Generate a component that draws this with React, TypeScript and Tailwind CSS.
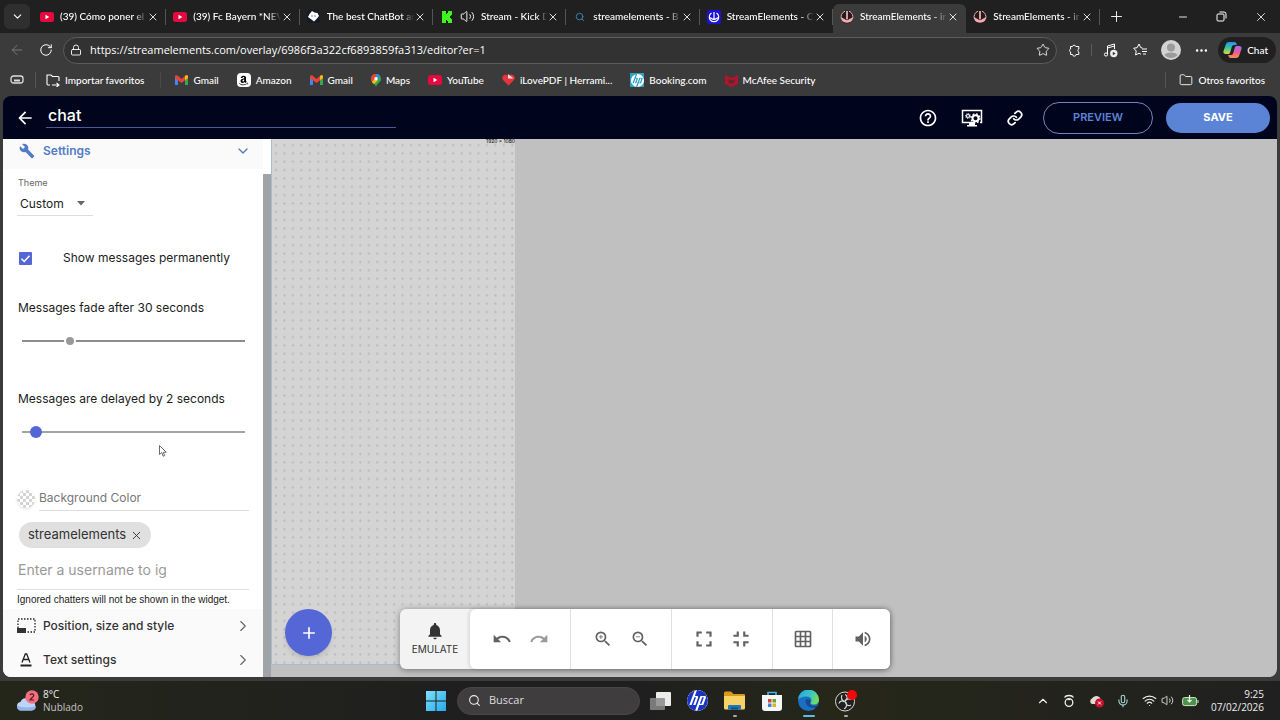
import type { ReactNode } from "react";
import {
    MdArrowBack,
    MdBuild,
    MdFullscreen,
    MdFullscreenExit,
    MdGridOn,
    MdHelpOutline,
    MdNotifications,
    MdRedo,
    MdUndo,
    MdVolumeUp,
    MdZoomIn,
    MdZoomOut,
} from "react-icons/md";
import { FaAmazon } from "react-icons/fa";
import { SiHp } from "react-icons/si";
import {
    ArrowLeft,
    ChevronDown,
    ChevronRight,
    ChevronUp,
    Ellipsis,
    Folder,
    Link,
    Lock,
    Mic,
    Minus,
    Plus,
    RotateCw,
    Search,
    Star,
    Volume2,
    Wifi,
    X,
} from "lucide-react";

const YoutubeIcon = () => (
    <svg width="14" height="14" viewBox="0 0 14 14">
        <rect y="2" width="14" height="10" rx="2.5" fill="#e5093f" />
        <path d="M5.5 4.8v4.4L9.3 7z" fill="#fff" />
    </svg>
);

const BotIcon = () => (
    <svg width="13" height="13" viewBox="0 0 13 13">
        <rect width="13" height="13" rx="3" fill="#161a26" />
        <path d="M5 1l2.500 1.500L10.500 3 12 6l-2.500 3L7 11.500 4.500 9.500 1 7l1.500-3z" fill="#fff" />
        <circle cx="5" cy="6" r=".7" fill="#555" />
        <circle cx="8" cy="6" r=".7" fill="#555" />
    </svg>
);

const KickIcon = () => (
    <svg width="12" height="12" viewBox="0 0 12 12">
        <path d="M1 0h4v3h1V2h1V0h4v4h-1v1H9v2h1v1h1v4H7v-2H6V9H5v3H1z" fill="#3df51a" />
    </svg>
);

const AnchorTileIcon = () => (
    <svg width="14" height="14" viewBox="0 0 14 14">
        <rect width="14" height="14" rx="2" fill="#1b12d6" />
        <path
            d="M4.500 3A4.700 4.700 0 1 0 9.500 3M7 2v7.500M2.500 7.500c1.500 0 2 2 4.500 2s3-2 4.500-2"
            stroke="#fff"
            strokeWidth="1.200"
            fill="none"
        />
    </svg>
);

const AnchorRoundIcon = () => (
    <svg width="14" height="14" viewBox="0 0 14 14">
        <circle cx="7" cy="7" r="6.500" fill="#2e1518" />
        <path d="M.8 7.500c2 0 3 2 6.200 2s4.200-2 6.200-2a6.300 6.300 0 0 1-12.400 0z" fill="#f0b0b3" />
        <path d="M5 1.200A6 6 0 0 0 1.500 9M9 1.200A6 6 0 0 1 12.500 9" stroke="#d9b5b7" fill="none" />
        <path d="M7 1v9" stroke="#fff" strokeWidth="1.300" />
        <path d="M4.500 8.500c.5 1.700 4.500 1.700 5 0" stroke="#7d2930" fill="none" />
    </svg>
);

const GmailIcon = () => (
    <svg width="13" height="10" viewBox="0 0 13 10">
        <path d="M0 1.500V10h3V4z" fill="#4285f4" />
        <path d="M13 1.500V10h-3V4z" fill="#34a853" />
        <path d="M0 1.500C0 0 1.500-.2 2.500.6L6.500 4l4-3.400c1-.8 2.500-.6 2.500.9V3L6.500 8 0 3z" fill="#ea4335" />
        <path d="M10 1l.5-.4c1-.8 2.500-.6 2.500.9V3l-3 2.300z" fill="#fbbc04" />
    </svg>
);

const MapsIcon = () => (
    <svg width="10" height="13" viewBox="0 0 10 13">
        <path d="M5 0a5 5 0 0 0-5 5c0 3.500 4 4 5 8 1-4 5-4.500 5-8a5 5 0 0 0-5-5z" fill="#34a853" />
        <path d="M5 0a5 5 0 0 1 4.300 2.400L5 5z" fill="#4285f4" />
        <path d="M5 0L5 5 1 8C-1 4 0 0 5 0z" fill="#ea4335" />
        <path d="M.8 7.700L5 4l1.500 2.500-3.600 3.800z" fill="#fbbc04" />
        <circle cx="5" cy="4.800" r="1.700" fill="#fff" />
    </svg>
);

const HpSquareIcon = () => (
    <span className="flex size-[14px] items-center justify-center bg-[#2aa3c4] text-white">
        <SiHp size={13} />
    </span>
);

const PdfHeartIcon = () => (
    <svg width="13" height="12" viewBox="0 0 13 12">
        <path d="M6.500 11.500L1 6A3.200 3.200 0 0 1 6.500 2 3.200 3.200 0 0 1 12 6z" fill="#e8323c" />
        <path d="M6 0l5.500 4.500H6z" fill="#f7dada" />
    </svg>
);

const McAfeeIcon = () => (
    <svg width="13" height="13" viewBox="0 0 13 13">
        <path d="M0 1l6.500 3L13 1v9l-6.500 3L0 10z" fill="#b3142b" />
        <path d="M3.500 5l3 1.500 3-1.500v3.500l-3 1.500-3-1.500z" fill="#5a2830" />
    </svg>
);

const PuzzleIcon = () => (
    <svg width="13" height="13" viewBox="0 0 13 13" fill="none" stroke="currentColor">
        <path d="M2.500 2.500h2a1.700 1.700 0 0 1 3.300 0h3V5a1.600 1.600 0 0 0 0 3v2.500H8a1.700 1.700 0 0 1-3.400 0h-2V8a1.600 1.600 0 0 1 0-3z" />
    </svg>
);

const MediaIcon = () => (
    <svg width="15" height="15" viewBox="0 0 15 15" fill="none" stroke="currentColor">
        <path d="M4.500 11.500V3l7-2v5M4.500 5l7-2" />
        <circle cx="3" cy="11.500" r="1.600" />
        <circle cx="10.800" cy="10.500" r="3.700" fill="#eee" stroke="none" />
        <path d="M9.800 8.800v3.400l2.700-1.700z" fill="#333" stroke="none" />
    </svg>
);

const FavoritesIcon = () => (
    <svg width="15" height="14" viewBox="0 0 15 14" fill="none" stroke="currentColor">
        <path d="M9.500 5L7.800 4.700 6 1 4.200 4.700.7 5.200 3.200 8l-.6 4L6 10.200l2 1M9 6h5M9 8.500h5M10 11h3" />
    </svg>
);

const CopilotIcon = () => (
    <svg width="19" height="18" viewBox="0 0 19 18">
        <defs>
            <linearGradient id="copilotLeft" x1="0" y1="0" x2="0" y2="1">
                <stop offset="0" stopColor="#2a8bf2" />
                <stop offset=".5" stopColor="#35c99a" />
                <stop offset="1" stopColor="#e9d33b" />
            </linearGradient>
            <linearGradient id="copilotRight" x1="0" y1="0" x2="0" y2="1">
                <stop offset="0" stopColor="#a86af0" />
                <stop offset=".5" stopColor="#e85b9c" />
                <stop offset="1" stopColor="#ff8b4a" />
            </linearGradient>
        </defs>
        <path d="M6 1h5.500c1.500 0 2 1.500 2.300 3H11c-1.500 0-2 1-2.400 2.500L7.300 11c-.4 1.500-1 2-2.500 2H3c-2 0-3-1-2.500-3L2.800 3.500C3.300 2 4 1 6 1z" fill="url(#copilotLeft)" />
        <path d="M13 17H7.500c-1.500 0-2-1.500-2.300-3H8c1.500 0 2-1 2.400-2.500L11.700 7c.4-1.500 1-2 2.500-2H16c2 0 3 1 2.500 3l-2.300 6.500C15.700 16 15 17 13 17z" fill="url(#copilotRight)" />
    </svg>
);

const OverlaySettingsIcon = () => (
    <svg width="22" height="18" viewBox="0 0 22 18" fill="none">
        <path d="M13 13.500H1.500v-12h19v12H19" stroke="#fff" strokeWidth="1.500" />
        <path d="M6 16.700h10" stroke="#fff" strokeWidth="1.600" />
        <path d="M8 14h6v3H8z" fill="#fff" />
        <circle cx="14.500" cy="9.300" r="3" stroke="#fff" strokeWidth="2" />
        <circle cx="14.500" cy="9.300" r="4.500" stroke="#fff" strokeWidth="1.300" strokeDasharray="1.800 1.730" />
        <circle cx="7" cy="7" r="1.500" stroke="#fff" strokeWidth="1.200" />
        <circle cx="7" cy="7" r="2.500" stroke="#fff" strokeDasharray="1 .96" />
    </svg>
);

const PositionIcon = () => (
    <svg width="19" height="16" viewBox="0 0 19 16">
        <rect x="1" y="1" width="17" height="13" fill="none" stroke="#222" strokeWidth="1.300" strokeDasharray="1.500 1.500" />
        <rect x="0" y="10" width="9" height="5" fill="#333" />
    </svg>
);

const TextColorIcon = () => (
    <svg width="12" height="14" viewBox="0 0 12 14" fill="none" stroke="#222">
        <path d="M2 9.500L5.300 1h1.400L10 9.500M3.300 6.500h5.400" strokeWidth="1.300" />
        <path d="M.5 12.500h11" strokeWidth="1.800" />
    </svg>
);

const WindowsIcon = () => (
    <svg width="20" height="20" viewBox="0 0 20 20">
        <defs>
            <linearGradient id="winBlue" x1="0" y1="0" x2="1" y2="1">
                <stop offset="0" stopColor="#7fe0fb" />
                <stop offset="1" stopColor="#25a9ea" />
            </linearGradient>
        </defs>
        <path d="M0 0h9.500v9.500H0zM10.500 0H20v9.500h-9.500zM0 10.500h9.500V20H0zM10.500 10.500H20V20h-9.500z" fill="url(#winBlue)" />
    </svg>
);

const TaskViewIcon = () => (
    <svg width="21" height="20" viewBox="0 0 21 20">
        <rect x="6" y="1" width="15" height="14" rx="1" fill="#ececec" />
        <rect x="0" y="7" width="15" height="12" rx="1" fill="#8b8b8b" fillOpacity=".85" />
    </svg>
);

const HpRoundIcon = () => (
    <span className="flex size-[21px] items-center justify-center overflow-hidden rounded-full bg-white text-[#1a35c4]">
        <SiHp size={21} />
    </span>
);

const ExplorerIcon = () => (
    <svg width="21" height="19" viewBox="0 0 21 19">
        <path d="M0 2a1.500 1.500 0 0 1 1.500-1.500H7L9.500 3H20a1 1 0 0 1 1 1v4H0z" fill="#d99a1c" />
        <path d="M0 5h21v12a1.500 1.500 0 0 1-1.500 1.500h-18A1.500 1.500 0 0 1 0 17z" fill="#f8d264" />
        <path d="M4 18.500V15a1 1 0 0 1 1-1h11a1 1 0 0 1 1 1v3.500z" fill="#1c78b8" />
        <path d="M7 16.500h7v2H7z" fill="#0d4f86" />
    </svg>
);

const StoreIcon = () => (
    <svg width="20" height="20" viewBox="0 0 20 20">
        <path d="M6 5V1.500h8V5" fill="none" stroke="#43b4e8" strokeWidth="1.600" />
        <path d="M0 4h20v13a3 3 0 0 1-3 3H3a3 3 0 0 1-3-3z" fill="#f4f6f8" />
        <path d="M6 8h3.500v3.500H6z" fill="#d8412c" />
        <path d="M10.500 8H14v3.500h-3.500z" fill="#6aa52a" />
        <path d="M6 12.500h3.500V16H6z" fill="#3b87c9" />
        <path d="M10.500 12.500H14V16h-3.500z" fill="#e3ac2c" />
    </svg>
);

const EdgeIcon = () => (
    <svg width="21" height="21" viewBox="0 0 21 21">
        <defs>
            <linearGradient id="edgeTop" x1="0" y1="0" x2="1" y2=".4">
                <stop offset="0" stopColor="#2a9fe0" />
                <stop offset=".6" stopColor="#38c5c9" />
                <stop offset="1" stopColor="#6fdc66" />
            </linearGradient>
        </defs>
        <circle cx="10.500" cy="10.500" r="10.500" fill="#1a6fc0" />
        <path d="M0 10A10.500 10.500 0 0 1 21 10c0 3-2.500 4.500-5 4.500-2 0-3.500-.8-3.500-1.600 0-.6 1-1 1-2.700 0-2-2-3.700-4.700-3.700C4 6.500.5 8.500 0 10z" fill="url(#edgeTop)" />
        <path d="M7.500 10.500c0 5 4 8 9.500 7a5 5 0 0 0 2.500-2.200c-2.500 1-6 .6-7.300-1-.8-1 .2-1.700.2-3 0-1.300-1-2-2.400-2-1.500 0-2.500.5-2.500 1.200z" fill="#164a93" />
        <path d="M17 17.500a6 6 0 0 0 4-3.500v5.500h-3z" fill="#262719" />
    </svg>
);

const ObsIcon = () => (
    <svg width="24" height="22" viewBox="0 0 24 22">
        <circle cx="11" cy="11.500" r="9.500" fill="#202020" stroke="#d8d8d8" />
        <g fill="none" stroke="#d8d8d8" strokeWidth="1.200">
            <path d="M8 5c-1.500 3 0 6 3 6.500" />
            <path d="M17.500 9.500c-3-1.500-6-.3-6.500 2" />
            <path d="M10 19c3-1.500 3.500-5 1-7.500" />
            <path d="M11 4.500c2.500 1 3 4 .5 6M17 15c-2.500 1.500-5 .2-5.500-3M5 13.500c.5-2.500 3.500-3.500 5.500-1.500" />
        </g>
        <circle cx="18" cy="5" r="5" fill="#f20a0a" />
    </svg>
);

const WeatherIcon = () => (
    <svg width="24" height="22" viewBox="0 0 24 22">
        <path d="M5 20.500a4.300 4.300 0 0 1-.6-8.500A6 6 0 0 1 15 11a4.900 4.900 0 0 1 1 9.500z" fill="#bcd4f5" />
        <path d="M5 20.500a4.300 4.300 0 0 1-4-5c3 2.500 15 2.500 19 .5a4.500 4.500 0 0 1-4 4.500z" fill="#8fb4ec" />
        <circle cx="16" cy="7" r="6.700" fill="#f0707e" />
        <path d="M14 5.200c.5-2 4-1.700 3.700.4-.2 1.400-2.700 2.600-3.600 4.400h4" fill="none" stroke="#5a1822" strokeWidth="1.200" />
    </svg>
);

const tabs = [
    { title: "(39) Cómo poner el", icon: <YoutubeIcon /> },
    { title: "(39) Fc Bayern *NEV", icon: <YoutubeIcon /> },
    { title: "The best ChatBot ar", icon: <BotIcon /> },
    { title: "Stream - Kick D", icon: <KickIcon />, audio: true },
    { title: "streamelements - B", icon: <Search size={10} color="#3d8fc4" /> },
    { title: "StreamElements - C", icon: <AnchorTileIcon /> },
    { title: "StreamElements - ir", icon: <AnchorRoundIcon />, active: true },
    { title: "StreamElements - ir", icon: <AnchorRoundIcon /> },
];

const bookmarks = [
    { label: "Gmail", icon: <GmailIcon /> },
    {
        label: "Amazon",
        icon: (
            <span className="flex size-[14px] items-center justify-center rounded-sm bg-white text-black">
                <FaAmazon size={11} />
            </span>
        ),
    },
    { label: "Gmail", icon: <GmailIcon /> },
    { label: "Maps", icon: <MapsIcon /> },
    { label: "YouTube", icon: <YoutubeIcon /> },
    { label: "iLovePDF | Herrami...", icon: <PdfHeartIcon /> },
    { label: "Booking.com", icon: <HpSquareIcon /> },
    { label: "McAfee Security", icon: <McAfeeIcon /> },
];

const Browser = () => (
    <div className="font-[Lato,sans-serif] text-[10px] font-medium text-white">
        {/* tabs */}
        <div className="flex h-[33px] items-stretch bg-[#202020]">
            <button aria-label="Tabs" className="my-1 ml-1 mr-[3px] flex w-[26px] shrink-0 items-center justify-center rounded-md bg-[#2f2f2f]">
                <ChevronDown size={13} />
            </button>
            <div className="grid w-5/6 shrink-0 grid-cols-8">
                {tabs.map((tab, i) => (
                    <div
                        key={i}
                        className={
                            tab.active
                                ? "mt-1 flex min-w-0 items-center rounded-t-md bg-[#3b3b3b] pb-1 pl-[7px] pr-[2px]"
                                : "flex min-w-0 items-center pl-[7px]"
                        }
                    >
                        <span className="flex w-[14px] shrink-0 justify-center">{tab.icon}</span>
                        {tab.audio && <Volume2 size={15} strokeWidth={1.500} className="ml-[6px] shrink-0" />}
                        <span className="ml-[6px] min-w-0 flex-1 whitespace-nowrap [mask-image:linear-gradient(to_right,black_85%,transparent)]">
                            {tab.title}
                        </span>
                        <button aria-label="Close tab" className="mr-[5px] shrink-0">
                            <X size={12} strokeWidth={1.700} />
                        </button>
                        {!tab.active && <span className="ml-px h-4 w-px bg-[#555]" />}
                    </div>
                ))}
            </div>
            <button aria-label="New tab" className="ml-2 mr-auto">
                <Plus size={17} strokeWidth={1.300} />
            </button>
            <div className="flex items-center gap-[27px] pr-3">
                <button aria-label="Minimize"><Minus size={12} strokeWidth={1.800} /></button>
                <button aria-label="Restore">
                    <svg width="11" height="11" viewBox="0 0 11 11" fill="none" stroke="currentColor">
                        <rect x="1" y="3" width="7" height="7" rx="1" />
                        <path d="M3.500 1H8a2 2 0 0 1 2 2v4.500" />
                    </svg>
                </button>
                <button aria-label="Close"><X size={14} strokeWidth={1.400} /></button>
            </div>
        </div>

        {/* address bar */}
        <div className="flex h-[34px] items-center bg-[#3b3b3b]">
            <button aria-label="Back" className="ml-[9px] text-[#777]"><ArrowLeft size={16} strokeWidth={1.500} /></button>
            <button aria-label="Reload" className="ml-[14px]"><RotateCw size={14} strokeWidth={1.700} /></button>
            <label className="ml-[10px] flex h-[27px] min-w-0 flex-1 items-center rounded-full border border-[#5c5c5c] bg-[#323232] px-[6px]">
                <Lock size={12} strokeWidth={1.800} className="shrink-0" />
                <input
                    aria-label="Address"
                    className="ml-2 min-w-0 flex-1 bg-transparent font-['Open_Sans',sans-serif] text-[11px] font-normal outline-none"
                    defaultValue="https://streamelements.com/overlay/6986f3a322cf6893859fa313/editor?er=1"
                />
                <Star size={14} strokeWidth={1.400} className="shrink-0" />
            </label>
            <div className="flex items-center pl-[11px]">
                <button aria-label="Extensions"><PuzzleIcon /></button>
                <span className="ml-[10px] h-3 w-px bg-[#5c5c5c]" />
                <button aria-label="Media" className="ml-[11px]"><MediaIcon /></button>
                <button aria-label="Favorites" className="ml-[15px]"><FavoritesIcon /></button>
                <button aria-label="Profile" className="ml-[13px]">
                    <svg width="20" height="20" viewBox="0 0 20 20">
                        <circle cx="10" cy="10" r="10" fill="#d3d3d3" />
                        <circle cx="10" cy="7.500" r="4" fill="#9b9b9b" />
                        <path d="M3.500 15c1-3.500 12-3.500 13 0-3 4-10 4-13 0z" fill="#9b9b9b" />
                    </svg>
                </button>
                <button aria-label="More" className="ml-[13px]"><Ellipsis size={15} /></button>
                <button className="ml-[9px] mr-1 flex h-[26px] items-center gap-[5px] rounded-full bg-[#202020] pl-[5px] pr-2">
                    <CopilotIcon />
                    Chat
                </button>
            </div>
        </div>

        {/* bookmarks */}
        <nav className="flex h-[29px] items-center bg-[#3b3b3b] pb-[3px]">
            <svg width="14" height="10" viewBox="0 0 14 10" fill="none" stroke="#ddd" strokeWidth="1.300" className="ml-[10px]">
                <rect x="1" y="1" width="12" height="7" rx="2.500" />
                <path d="M4 5.500h6" strokeWidth="2" />
            </svg>
            <span className="ml-[11px] h-4 w-px bg-[#555]" />
            <a href="#" className="ml-[10px] flex items-center gap-[5px] whitespace-nowrap">
                <svg width="14" height="14" viewBox="0 0 14 14" fill="none" stroke="currentColor" strokeWidth="1.100">
                    <path d="M4 12H2a1 1 0 0 1-1-1V2h4l1.500 1.500H12a1 1 0 0 1 1 1V8M6 12h7M10.500 9.800l2.500 2.200-2.500 2" />
                </svg>
                Importar favoritos
            </a>
            <span className="ml-4 h-4 w-px bg-[#494949]" />
            <div className="ml-[14px] flex gap-[18px]">
                {bookmarks.map((item, i) => (
                    <a href="#" key={i} className="flex items-center gap-[5px] whitespace-nowrap">
                        {item.icon}
                        {item.label}
                    </a>
                ))}
            </div>
            <span className="ml-auto h-4 w-px bg-[#555]" />
            <a href="#" className="ml-[13px] mr-[15px] flex items-center gap-[5px] whitespace-nowrap">
                <Folder size={14} strokeWidth={1.500} />
                Otros favoritos
            </a>
        </nav>
    </div>
);

const EditorHeader = () => (
    <header className="flex h-[43px] shrink-0 items-center bg-[#00041c] pl-3 pr-[7px] text-white">
        <button aria-label="Back to overlays"><MdArrowBack size={20} /></button>
        <input
            aria-label="Overlay name"
            defaultValue="chat"
            className="mb-[2px] ml-[11px] h-[22px] w-[350px] border-b border-[#4a5a96] bg-transparent pb-[2px] pl-[2px] text-base font-medium outline-none"
        />
        <div className="ml-auto flex items-center">
            <button aria-label="Help"><MdHelpOutline size={20} /></button>
            <button aria-label="Overlay settings" className="ml-[23px]"><OverlaySettingsIcon /></button>
            <button aria-label="Copy link" className="ml-6"><Link size={16} strokeWidth={2.600} /></button>
            <button className="ml-5 h-8 w-[110px] rounded-full border border-[#7484b8] text-[11px] font-semibold text-[#5b84d7]">
                PREVIEW
            </button>
            <button className="ml-[13px] h-[30px] w-[104px] rounded-full bg-[#5b84d7] text-[11px] font-bold">
                SAVE
            </button>
        </div>
    </header>
);

const sliderClass =
    "block h-5 w-full appearance-none bg-transparent [&::-webkit-slider-runnable-track]:h-[2px] [&::-webkit-slider-thumb]:appearance-none [&::-webkit-slider-thumb]:rounded-full [&::-webkit-slider-thumb]:size-3 [&::-webkit-slider-thumb]:-mt-[5px]";

const PanelRow = ({ icon, label }: { icon: ReactNode; label: string }) => (
    <button className="flex h-[34px] w-full items-center bg-[#fafafa] pl-[13px] pr-[11px] text-left font-medium text-[#333]">
        <span className="mr-[7px] flex w-5 justify-center">{icon}</span>
        {label}
        <ChevronRight size={18} strokeWidth={1.500} className="ml-auto text-[#666]" />
    </button>
);

const SettingsPanel = () => (
    <aside className="relative flex w-[268px] shrink-0 bg-white text-xs text-[#1c1c1c]">
        <div className="min-w-0 flex-1">
            <button className="flex h-[30px] w-full items-center bg-[#fafafa] pb-[6px] pl-4 pr-3 font-semibold text-[#527cc6]">
                <MdBuild size={16} className="mr-2" />
                Settings
                <ChevronDown size={16} className="ml-auto" />
            </button>

            <div className="px-[14px]">
                <label htmlFor="theme" className="mt-2 block pl-px text-[9px] leading-3 text-[#666]">Theme</label>
                <div className="relative mt-1 w-[76px]">
                    <select id="theme" className="h-[23px] w-full appearance-none border-b border-[#ddd] bg-transparent pl-[3px] outline-none">
                        <option>Custom</option>
                    </select>
                    <svg width="8" height="5" viewBox="0 0 8 5" className="absolute right-2 top-2">
                        <path d="M0 0h8L4 4.500z" fill="#666" />
                    </svg>
                </div>

                <label className="mt-8 flex h-5 items-center">
                    <span className="ml-[2px] grid">
                        <input type="checkbox" defaultChecked className="col-start-1 row-start-1 size-[13px] appearance-none rounded-[1px] checked:bg-[#5566d6]" />
                        <svg width="13" height="13" viewBox="0 0 13 13" className="pointer-events-none col-start-1 row-start-1">
                            <path d="M2.500 6.800l2.700 2.700 5.300-5.800" fill="none" stroke="#fff" strokeWidth="1.500" />
                        </svg>
                    </span>
                    <span className="ml-[31px]">Show messages permanently</span>
                </label>

                <label htmlFor="fade" className="mt-[30px] block pl-px leading-5">Messages fade after 30 seconds</label>
                <div className="mt-[13px] pl-[5px] pr-1">
                    <input
                        id="fade"
                        type="range"
                        min="0"
                        max="150"
                        defaultValue="30"
                        className={`${sliderClass} [&::-webkit-slider-runnable-track]:bg-[#8c8c8c] [&::-webkit-slider-thumb]:border-2 [&::-webkit-slider-thumb]:border-white [&::-webkit-slider-thumb]:bg-[#999]`}
                    />
                </div>

                <label htmlFor="delay" className="mt-[38px] block pl-px leading-5">Messages are delayed by 2 seconds</label>
                <div className="mt-[13px] pl-[5px] pr-1">
                    <input
                        id="delay"
                        type="range"
                        min="0"
                        max="50"
                        defaultValue="2"
                        className={`${sliderClass} [&::-webkit-slider-runnable-track]:bg-[#a3a3a3] [&::-webkit-slider-thumb]:bg-[#5566d6]`}
                    />
                </div>

                <label className="mt-11 flex h-[25px] items-center">
                    <span className="size-[18px] shrink-0 rounded-full bg-[repeating-conic-gradient(#d4d4d4_0_25%,#fff_0_50%)] bg-[size:6px_6px] shadow" />
                    <input
                        aria-label="Background Color"
                        placeholder="Background Color"
                        className="ml-1 h-[25px] min-w-0 flex-1 border-b border-[#ddd] bg-transparent pb-[2px] outline-none placeholder:text-[#777]"
                    />
                </label>

                <div className="ml-[2px] mt-[11px] flex h-[26px] w-fit items-center gap-1 rounded-full bg-[#e0e0e0] pl-[9px] pr-2 text-[13px] text-[#333]">
                    <span>streamelements</span>
                    <button aria-label="Remove streamelements"><X size={13} strokeWidth={1.700} /></button>
                </div>

                <div className="mt-[10px] h-8 border-b border-[#ddd] pl-px">
                    <input
                        aria-label="Ignored username"
                        placeholder="Enter a username to ignore"
                        className="block h-[22px] w-[148px] bg-transparent text-sm outline-none placeholder:text-[#999]"
                    />
                </div>
                <p className="whitespace-nowrap font-['Liberation_Sans',sans-serif] text-[10px] leading-[19px] text-[#222]">
                    Ignored chatters will not be shown in the widget.
                </p>
            </div>

            <PanelRow icon={<PositionIcon />} label="Position, size and style" />
            <PanelRow icon={<TextColorIcon />} label="Text settings" />
        </div>
        {/* scrollbar */}
        <div className="mt-[35px] w-2 shrink-0 bg-[#a0a4a7]" />
        {/* mouse pointer */}
        <svg width="8" height="12" viewBox="0 0 8 12" className="absolute left-[156px] top-[306px]">
            <path d="M.5.5v9l2.200-2 1.500 3.700 1.500-.6-1.500-3.400h3z" fill="#fff" stroke="#444" strokeWidth=".8" />
        </svg>
    </aside>
);

const toolClass = "flex size-5 items-center justify-center text-[#616161]";

const Toolbar = () => (
    <div className="absolute bottom-2 left-[129px] flex h-[60px] rounded-md bg-[#f3f3f3] shadow-[0_1px_6px_rgba(0,0,0,0.4)]">
        <button className="flex w-[70px] flex-col items-center justify-center text-[10px] leading-4 text-[#333]">
            <MdNotifications size={20} />
            EMULATE
        </button>
        <div className="flex divide-x divide-[#e0e0e0] rounded-md bg-white shadow-[0_0_5px_rgba(0,0,0,0.2)]">
            <div className="flex w-[101px] items-center justify-center gap-[17px]">
                <button aria-label="Undo" className={toolClass}><MdUndo size={20} /></button>
                <button aria-label="Redo" className="flex size-5 items-center justify-center text-[#999]"><MdRedo size={20} /></button>
            </div>
            <div className="flex w-[101px] items-center justify-center gap-[17px]">
                <button aria-label="Zoom in" className={toolClass}><MdZoomIn size={20} /></button>
                <button aria-label="Zoom out" className={toolClass}><MdZoomOut size={20} /></button>
            </div>
            <div className="flex w-[101px] items-center justify-center gap-[17px]">
                <button aria-label="Fit to screen" className={toolClass}><MdFullscreen size={26} className="shrink-0" /></button>
                <button aria-label="Actual size" className={toolClass}><MdFullscreenExit size={26} className="shrink-0" /></button>
            </div>
            <div className="flex w-[60px] items-center justify-center">
                <button aria-label="Grid" className={toolClass}><MdGridOn size={20} /></button>
            </div>
            <div className="flex w-[57px] items-center justify-center pl-[3px]">
                <button aria-label="Volume" className={toolClass}><MdVolumeUp size={20} /></button>
            </div>
        </div>
    </div>
);

const Canvas = () => (
    <main className="relative min-w-0 flex-1 bg-[#c0c0c0]">
        <div className="absolute bottom-3 left-0 top-0 w-[244px] border-b border-l border-[#a9bccb] bg-[#d4d4d4]">
            <svg width="100%" height="100%">
                <defs>
                    <pattern id="dots" width="8.440" height="8.350" patternUnits="userSpaceOnUse">
                        <rect x="3" y="5" width="2" height="2" fill="#b8b8b8" />
                    </pattern>
                </defs>
                <rect width="100%" height="100%" fill="url(#dots)" />
            </svg>
            <span className="absolute right-0 top-0 text-[5px] leading-[5px] text-black">1920 x 1080</span>
        </div>
        <button aria-label="Add widget" className="absolute bottom-[21px] left-[14px] flex size-[47px] items-center justify-center rounded-full bg-[#5566d6] text-white shadow-md">
            <Plus size={18} strokeWidth={2.200} />
        </button>
        <Toolbar />
    </main>
);

const TaskButton = ({ label, children, mark }: { label: string; children: ReactNode; mark?: string }) => (
    <button aria-label={label} className="relative flex h-8 w-[37px] items-center justify-center">
        {children}
        {mark && <span className={mark} />}
    </button>
);

const Taskbar = () => (
    <footer className="grid h-[39px] shrink-0 grid-cols-[1fr_auto_1fr] items-center bg-[linear-gradient(90deg,#25261a,#1f1f1f_35%,#1f1f1f_50%,#262719_65%,#202020)] text-[10px] text-[#eee]">
        <div className="flex items-center gap-[3px] pl-4">
            <WeatherIcon />
            <div className="leading-[13px]">
                <p>8°C</p>
                <p className="text-[#c4c4c4]">Nublado</p>
            </div>
        </div>
        <div className="ml-[10px] flex items-center">
            <button aria-label="Start"><WindowsIcon /></button>
            <label className="ml-[11px] mr-[2px] flex h-7 w-[183px] items-center gap-2 rounded-full border border-[#4a4648] bg-[#403d3f] px-[10px] text-[11px]">
                <Search size={13} className="shrink-0" />
                <input aria-label="Buscar" placeholder="Buscar" className="min-w-0 flex-1 bg-transparent outline-none placeholder:text-[#ddd]" />
            </label>
            <TaskButton label="Task view"><TaskViewIcon /></TaskButton>
            <TaskButton label="HP"><HpRoundIcon /></TaskButton>
            <TaskButton label="Explorer" mark="absolute bottom-0 h-[2px] w-1 rounded-full bg-[#aaa]"><ExplorerIcon /></TaskButton>
            <TaskButton label="Store"><StoreIcon /></TaskButton>
            <TaskButton label="Edge" mark="absolute bottom-0 h-[2px] w-3 rounded-full bg-[#62b8ea]"><EdgeIcon /></TaskButton>
            <TaskButton label="OBS" mark="absolute bottom-0 h-[2px] w-1 rounded-full bg-[#aaa]"><ObsIcon /></TaskButton>
        </div>
        <div className="flex items-center justify-end pr-4">
            <ChevronUp size={14} />
            <svg width="12" height="14" viewBox="0 0 12 14" fill="none" stroke="#eee" strokeWidth="1.300" className="ml-[13px]">
                <path d="M1.500 3.500C3 .8 9 .8 10.500 3.500" />
                <circle cx="6" cy="8.500" r="3.800" />
                <path d="M4.500 5.500h3" />
            </svg>
            <svg width="16" height="14" viewBox="0 0 16 14" className="ml-[14px]">
                <path d="M3 10a3 3 0 0 1 0-5.500C5 1 10 1 11.500 4.500L8 10z" fill="#dcdcd4" />
                <circle cx="10.500" cy="9" r="4.500" fill="#c8102e" />
                <path d="M9 7.500l3 3m0-3l-3 3" stroke="#fff" />
            </svg>
            <Mic size={14} strokeWidth={1.800} className="ml-[11px] text-[#a5dcd8]" />
            <Wifi size={15} strokeWidth={1.800} className="ml-3" />
            <Volume2 size={13} strokeWidth={1.600} className="ml-1" />
            <svg width="17" height="12" viewBox="0 0 17 12" className="ml-2">
                <rect x=".6" y="2.600" width="14" height="8" rx="2" fill="#4f8f50" stroke="#c9f0c0" />
                <path d="M16 5v3" stroke="#c9f0c0" />
                <path d="M7.500 0v7M5.500 5l2 2 2-2" fill="none" stroke="#e6ffe0" strokeWidth="1.200" />
            </svg>
            <div className="ml-3 text-right leading-[13px]">
                <p>9:25</p>
                <p>07/02/2026</p>
            </div>
        </div>
    </footer>
);

const App = () => {
    return (
        <div className="flex min-h-screen flex-col bg-[#3b3b3b] font-['Open_Sans',sans-serif]">
            <Browser />
            <div className="mx-[3px] mb-1 flex flex-1 flex-col overflow-hidden rounded-lg font-['Inter',sans-serif]">
                <EditorHeader />
                <div className="flex flex-1">
                    <SettingsPanel />
                    <Canvas />
                </div>
            </div>
            <Taskbar />
        </div>
    );
};

export default App;
